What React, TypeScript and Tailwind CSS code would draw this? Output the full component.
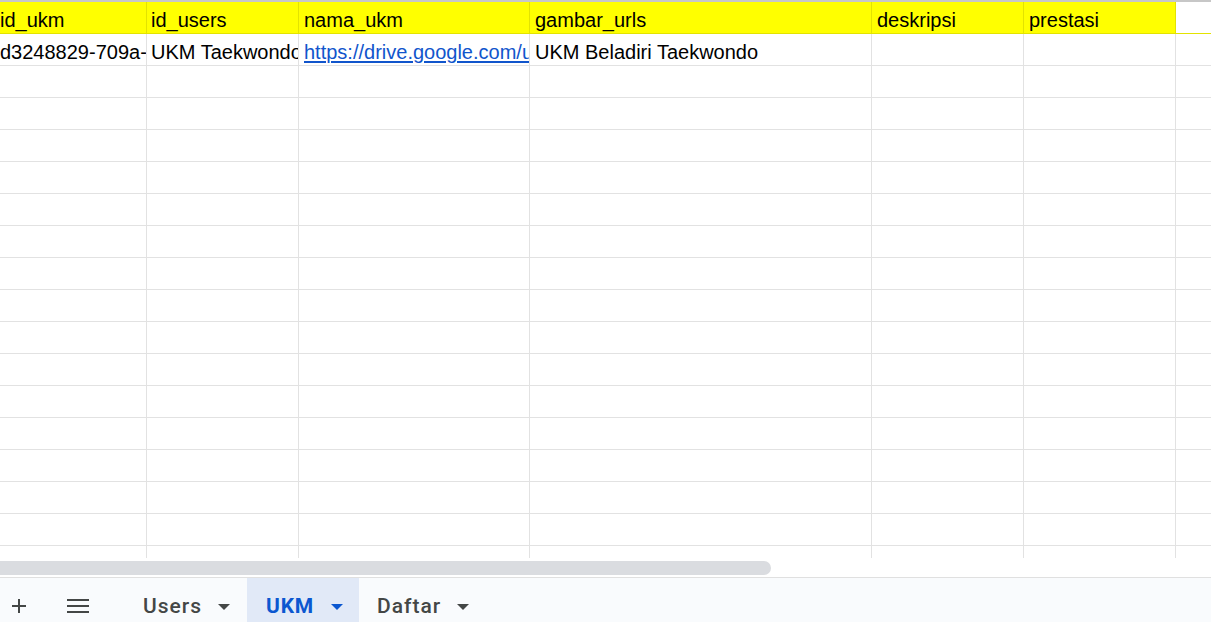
import React from "react";

const cols = [147, 152, 231, 342, 152, 152, 60];
const headers = ["id_ukm", "id_users", "nama_ukm", "gambar_urls", "deskripsi", "prestasi", ""];
const firstRow = ["d3248829-709a-4c1e", "UKM Taekwondo", "https://drive.google.com/uc?id=1", "UKM Beladiri Taekwondo", "", "", ""];

function Caret({ color = "#444746" }: { color?: string }) {
    return (
        <svg width="12" height="6" viewBox="0 0 12 6">
            <path d="M0 0 L12 0 L6 6 Z" fill={color} />
        </svg>
    );
}

function Row({ cells, header }: { cells: string[]; header?: boolean }) {
    return (
        <div className={`flex h-[32px] shrink-0 border-b ${header ? "border-[#e3e300]" : "border-[#e2e2e2]"}`}>
            {cols.map((w, i) => {
                const yellow = header && i < 6;
                const edge = yellow ? "border-[#e3e300]" : "border-[#e2e2e2]";
                const pad = i === 0 ? "pl-0" : i === 1 ? "pl-[4px]" : "pl-[5px]";
                const isLink = !header && i === 2;
                return (
                    <div
                        key={i}
                        style={{ width: i === 6 ? undefined : w }}
                        className={`${i === 6 ? "flex-1" : "shrink-0 border-r"} ${edge} ${yellow ? "bg-[#ffff00]" : "bg-white"} ${pad} flex items-end pb-[1px] overflow-hidden whitespace-nowrap`}
                    >
                        <span className={`leading-[23px] ${isLink ? "text-[#1155cc] underline underline-offset-[2px]" : "text-black"}`}>
                            {cells[i]}
                        </span>
                    </div>
                );
            })}
        </div>
    );
}

export default function App() {
    const empty = Array.from({ length: 16 }, () => ["", "", "", "", "", "", ""]);

    return (
        <div className="w-[1211px] h-[622px] flex flex-col overflow-hidden bg-white font-['Liberation_Sans',Arial,sans-serif] text-[20px]">
            {/* grid */}
            <div className="h-[558px] shrink-0 border-t-2 border-[#c7c7c7] flex flex-col overflow-hidden">
                <Row cells={headers} header />
                <Row cells={firstRow} />
                {empty.map((c, i) => (
                    <Row key={i} cells={c} />
                ))}
            </div>

            {/* horizontal scrollbar */}
            <div className="h-[20px] shrink-0 border-b border-[#e0e0e0] flex items-start pt-[3px]">
                <div className="w-[771px] h-[14px] rounded-r-full bg-[#dadce0]" />
            </div>

            {/* sheet tabs */}
            <div className="flex-1 bg-[#f9fbfd] flex items-stretch font-['Roboto',sans-serif] text-[21px] font-medium text-[#444746]">
                <div className="w-[36px] flex items-center justify-center pl-[1px] pt-[11px]">
                    <svg width="16" height="16" viewBox="0 0 16 16">
                        <path d="M8 1 V15 M1 8 H15" stroke="#444746" strokeWidth="2" />
                    </svg>
                </div>
                <div className="w-[82px] flex items-center justify-center pl-[1px] pt-[11px]">
                    <svg width="22" height="14" viewBox="0 0 22 14">
                        <path d="M0 1 H22 M0 7 H22 M0 13 H22" stroke="#444746" strokeWidth="2" />
                    </svg>
                </div>
                <div className="flex items-center gap-[16px] pl-[25px] pr-[17px] pt-[13px]">
                    <span className="tracking-[1px]">Users</span>
                    <Caret />
                </div>
                <div className="flex items-center gap-[17px] pl-[19px] pr-[16px] pt-[13px] bg-[#e1e9f7] text-[#0b57d0] font-bold">
                    <span className="tracking-[0.8px]">UKM</span>
                    <Caret color="#0b57d0" />
                </div>
                <div className="flex items-center gap-[16px] pl-[18px] pr-[18px] pt-[13px]">
                    <span className="tracking-[1px]">Daftar</span>
                    <Caret />
                </div>
            </div>
        </div>
    );
}
